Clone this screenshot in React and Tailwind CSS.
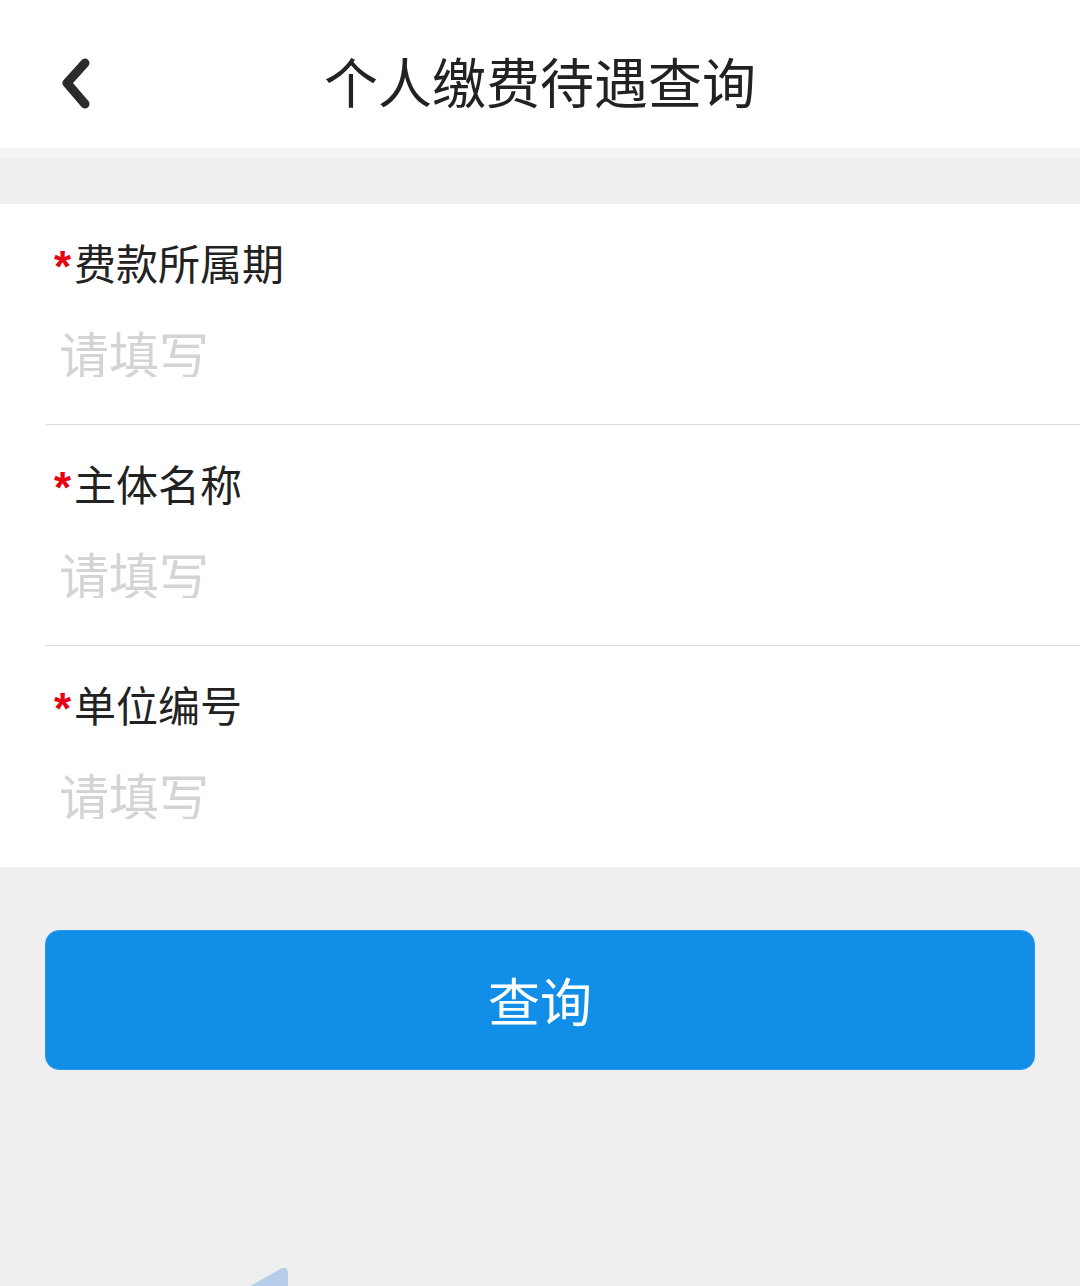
import React from 'react'

const font = { fontFamily: '"Noto Sans CJK SC", "Noto Sans", sans-serif' }

const fields = ['费款所属期', '主体名称', '单位编号']

function Field({ label, last }) {
  return (
    <div className={`ml-[45px] h-[221px] pt-[37px] ${last ? '' : 'border-b border-[#dedede]'}`}>
      <div className="flex items-start h-[42px] leading-none pl-[9px]">
        <span
          className="text-[#e60012] text-[44px] font-bold leading-none mt-[4px] w-[20px] h-[42px]"
          style={{ fontFamily: '"Liberation Sans", sans-serif' }}
        >
          *
        </span>
        <span className="text-[42px] text-[#222] leading-none">{label}</span>
      </div>
      <input
        placeholder="请填写"
        className="block mt-[44px] ml-[14px] w-[900px] h-[50px] text-[50px] leading-none text-[#222] placeholder-[#d4d4d4] outline-none bg-transparent"
        style={font}
      />
    </div>
  )
}

export default function App() {
  return (
    <div className="min-h-screen bg-[#efefef] overflow-hidden" style={font}>
      {/* Header */}
      <header className="relative h-[148px] bg-white flex items-center justify-center">
        <button className="absolute left-[52px] top-[52px] w-[48px] h-[60px] flex items-center justify-center">
          <svg width="40" height="56" viewBox="0 0 40 56">
            <path d="M29 9 L11 29 L29 50" fill="none" stroke="#2b2b2b" strokeWidth="9" strokeLinecap="round" strokeLinejoin="round" />
          </svg>
        </button>
        <h1 className="text-[54px] leading-none text-[#222] font-normal mt-[14px]">个人缴费待遇查询</h1>
      </header>

      <div className="h-[10px] bg-[#f4f4f4]" />
      <div className="h-[46px]" />

      {/* Form */}
      <section className="bg-white">
        {fields.map((f, i) => (
          <Field key={f} label={f} last={i === fields.length - 1} />
        ))}
      </section>

      {/* Submit */}
      <div className="px-[45px] pt-[63px]">
        <button className="w-full h-[140px] rounded-[14px] bg-[#118fe8] border border-[#2c9bef] text-white text-[52px] leading-none flex items-center justify-center">
          查询
        </button>
      </div>

      <div className="pl-[240px] pt-[196px]">
        <svg width="50" height="40" viewBox="0 0 50 40">
          <path d="M40 3 Q48 -1 48 8 L48 40 L0 40 L0 26 Z" fill="#b8cdea" />
        </svg>
      </div>
    </div>
  )
}
